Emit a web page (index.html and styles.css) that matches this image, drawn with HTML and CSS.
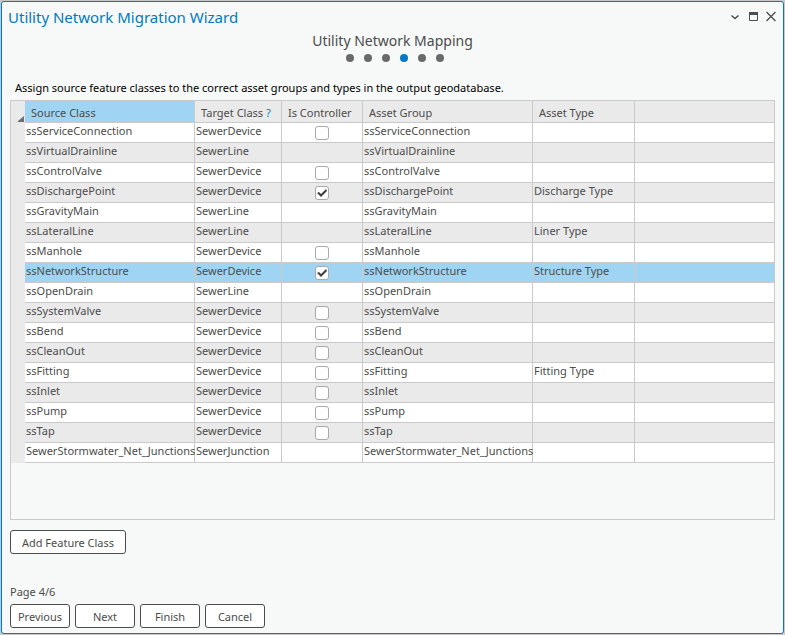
FILE: index.html
```html
<!DOCTYPE html>
<html lang="en">
<head>
<meta charset="UTF-8">
<meta name="viewport" content="width=device-width, initial-scale=1.0">
<title>Utility Network Migration Wizard</title>
<link rel="stylesheet" href="styles.css">
</head>
<body>
<main class="window">
<header class="titlebar">
<h1>Utility Network Migration Wizard</h1>
<div class="window-controls">
<button type="button" aria-label="Options"><svg width="12" height="12" viewBox="0 0 12 12"><path d="M2.5 4.5 L6 7.5 L9.5 4.5" fill="none" stroke="#4c4c4c" stroke-width="1.5"/></svg></button>
<button type="button" aria-label="Maximize"><svg width="12" height="12" viewBox="0 0 12 12"><path d="M2.5 1.5h8v8h-8z" fill="none" stroke="#4c4c4c"/><path d="M2 1h9v3H2z" fill="#4c4c4c"/></svg></button>
<button type="button" aria-label="Close"><svg width="12" height="12" viewBox="0 0 12 12"><path d="M1.5 1 L10.5 10 M10.5 1 L1.5 10" fill="none" stroke="#4c4c4c" stroke-width="1.3"/></svg></button>
</div>
</header>

<section class="step">
<h2>Utility Network Mapping</h2>
<div class="dots">
<span></span><span></span><span></span><span class="current"></span><span></span><span></span>
</div>
</section>

<p class="description">Assign source feature classes to the correct asset groups and types in the output geodatabase.</p>

<div class="grid">
<table>
<colgroup>
<col class="col-select">
<col class="col-class">
<col class="col-target">
<col class="col-controller">
<col class="col-class">
<col class="col-type">
<col>
</colgroup>
<thead>
<tr>
<td class="corner"><svg width="7" height="6" viewBox="0 0 7 6"><path d="M7 0v6H0z" fill="#6e6e6e"/></svg></td>
<th class="sorted">Source Class</th>
<th>Target Class <a href="#" class="help">?</a></th>
<th>Is Controller</th>
<th>Asset Group</th>
<th>Asset Type</th>
<th></th>
</tr>
</thead>
<tbody>
<tr><td></td><td>ssServiceConnection</td><td>SewerDevice</td><td><input type="checkbox" aria-label="ssServiceConnection is controller"></td><td>ssServiceConnection</td><td></td><td></td></tr>
<tr><td></td><td>ssVirtualDrainline</td><td>SewerLine</td><td></td><td>ssVirtualDrainline</td><td></td><td></td></tr>
<tr><td></td><td>ssControlValve</td><td>SewerDevice</td><td><input type="checkbox" aria-label="ssControlValve is controller"></td><td>ssControlValve</td><td></td><td></td></tr>
<tr><td></td><td>ssDischargePoint</td><td>SewerDevice</td><td><input type="checkbox" aria-label="ssDischargePoint is controller" checked></td><td>ssDischargePoint</td><td>Discharge Type</td><td></td></tr>
<tr><td></td><td>ssGravityMain</td><td>SewerLine</td><td></td><td>ssGravityMain</td><td></td><td></td></tr>
<tr><td></td><td>ssLateralLine</td><td>SewerLine</td><td></td><td>ssLateralLine</td><td>Liner Type</td><td></td></tr>
<tr><td></td><td>ssManhole</td><td>SewerDevice</td><td><input type="checkbox" aria-label="ssManhole is controller"></td><td>ssManhole</td><td></td><td></td></tr>
<tr class="selected"><td></td><td>ssNetworkStructure</td><td>SewerDevice</td><td><input type="checkbox" aria-label="ssNetworkStructure is controller" checked></td><td>ssNetworkStructure</td><td>Structure Type</td><td></td></tr>
<tr><td></td><td>ssOpenDrain</td><td>SewerLine</td><td></td><td>ssOpenDrain</td><td></td><td></td></tr>
<tr><td></td><td>ssSystemValve</td><td>SewerDevice</td><td><input type="checkbox" aria-label="ssSystemValve is controller"></td><td>ssSystemValve</td><td></td><td></td></tr>
<tr><td></td><td>ssBend</td><td>SewerDevice</td><td><input type="checkbox" aria-label="ssBend is controller"></td><td>ssBend</td><td></td><td></td></tr>
<tr><td></td><td>ssCleanOut</td><td>SewerDevice</td><td><input type="checkbox" aria-label="ssCleanOut is controller"></td><td>ssCleanOut</td><td></td><td></td></tr>
<tr><td></td><td>ssFitting</td><td>SewerDevice</td><td><input type="checkbox" aria-label="ssFitting is controller"></td><td>ssFitting</td><td>Fitting Type</td><td></td></tr>
<tr><td></td><td>ssInlet</td><td>SewerDevice</td><td><input type="checkbox" aria-label="ssInlet is controller"></td><td>ssInlet</td><td></td><td></td></tr>
<tr><td></td><td>ssPump</td><td>SewerDevice</td><td><input type="checkbox" aria-label="ssPump is controller"></td><td>ssPump</td><td></td><td></td></tr>
<tr><td></td><td>ssTap</td><td>SewerDevice</td><td><input type="checkbox" aria-label="ssTap is controller"></td><td>ssTap</td><td></td><td></td></tr>
<tr><td></td><td>SewerStormwater_Net_Junctions</td><td>SewerJunction</td><td></td><td>SewerStormwater_Net_Junctions</td><td></td><td></td></tr>
</tbody>
</table>
</div>

<div class="actions">
<button type="button" class="btn btn-wide">Add Feature Class</button>
</div>

<footer>
<p class="page">Page 4/6</p>
<div class="nav">
<button type="button" class="btn">Previous</button>
<button type="button" class="btn">Next</button>
<button type="button" class="btn">Finish</button>
<button type="button" class="btn">Cancel</button>
</div>
</footer>
</main>
</body>
</html>
```
FILE: styles.css
```css
* {
    box-sizing: border-box;
}
body {
    margin: 0;
    padding: 1px;
    background-color: #c8c8c8;
    color: #4c4c4c;
    font-family: "Noto Sans", "Open Sans", sans-serif;
    font-size: 11px;
    line-height: 16px;
}
h1, h2, p {
    margin: 0;
}
.window {
    display: flex;
    flex-direction: column;
    min-height: calc(100vh - 2px);
    padding: 0 8px 5px;
    background-color: #f7f9f8;
    border: 1px solid #007ac2;
    border-radius: 3px;
}

/* title bar */
.titlebar {
    display: flex;
    justify-content: space-between;
    align-items: center;
    height: 30px;
    margin: 0 -2px;
}
.titlebar h1 {
    color: #007ac2;
    font-size: 15px;
    font-weight: 400;
    line-height: 24px;
}
.window-controls {
    display: flex;
    gap: 6px;
}
.window-controls button {
    display: flex;
    width: 12px;
    height: 12px;
    padding: 0;
    border: none;
    background: none;
}

/* step heading */
.step {
    text-align: center;
}
.step h2 {
    font-size: 14px;
    font-weight: 400;
    line-height: 18px;
}
.dots {
    display: flex;
    justify-content: center;
    gap: 10px;
    padding: 4px 0 18px 4px;
}
.dots span {
    width: 8px;
    height: 8px;
    border-radius: 50%;
    background-color: #6a6a6a;
}
.dots .current {
    background-color: #007ac2;
}
.description {
    padding: 0 5px 4px;
    color: #000;
}

/* mapping grid */
.grid {
    flex: 1;
    border: 1px solid #cacaca;
}
table {
    width: 100%;
    table-layout: fixed;
    border-collapse: separate;
    border-spacing: 0;
}
.col-select {
    width: 14px;
}
.col-class {
    width: 170px;
}
.col-target {
    width: 87px;
}
.col-controller {
    width: 81px;
}
.col-type {
    width: 102px;
}
th, td {
    border-right: 1px solid #cacaca;
    border-bottom: 1px solid #cacaca;
    text-align: left;
    white-space: nowrap;
}
th {
    height: 22px;
    padding: 3px 0 0 6px;
    background-color: #eaeaea;
    font-weight: 400;
}
td {
    height: 20px;
    padding: 0 0 2px 1px;
    vertical-align: top;
}
th:last-child, td:last-child {
    border-right: none;
}
td:first-child {
    padding: 0;
    border: none;
    background-color: #eaeaea;
}
.corner {
    text-align: right;
}
td.corner {
    vertical-align: bottom;
}
.corner svg {
    display: block;
    margin: 0 1px 1px auto;
}
.sorted, .selected td:not(:first-child) {
    background-color: #9fd5f3;
}
.help {
    color: #007ac2;
    text-decoration: none;
}
tbody tr {
    background-color: #fff;
}
tbody tr:nth-child(even) {
    background-color: #eaeaea;
}
input[type="checkbox"] {
    appearance: none;
    display: block;
    width: 14px;
    height: 14px;
    margin: 3px 0 0 32px;
    border: 1px solid #a9a9a9;
    border-radius: 3px;
    background-color: #fff;
}
input[type="checkbox"]:checked::before {
    content: "";
    display: block;
    width: 12px;
    height: 12px;
    background-color: #404040;
    clip-path: polygon(1px 6px, 3px 5px, 5px 7px, 10px 2px, 11px 4px, 5px 10px);
}

/* buttons */
.btn {
    width: 60px;
    height: 24px;
    padding: 1px 0 0;
    border: 1px solid #4c4c4c;
    border-radius: 3px;
    background-color: #fff;
    color: #4c4c4c;
    font: inherit;
}
.btn-wide {
    width: 116px;
}
.actions {
    padding: 10px 0 30px;
}
.actions .btn {
    display: block;
}
.page {
    padding-bottom: 4px;
}
.nav {
    display: flex;
    gap: 5px;
}
```
